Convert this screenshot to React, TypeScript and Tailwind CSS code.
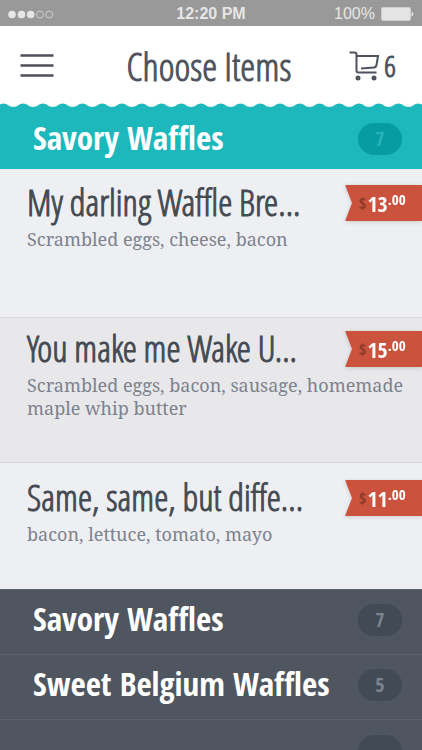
import React from "react";

const bold = "font-['Open_Sans_Condensed',sans-serif] font-bold";
const medium =
  "font-['Open_Sans_Condensed_Light','Open_Sans_Condensed',sans-serif] font-light [-webkit-text-stroke:1px]";
const slab = "font-['Noto_Serif','DejaVu_Serif',serif]";

function StatusBar() {
  return (
    <div className="grid h-[26px] grid-cols-3 items-center bg-[#999999] pt-0.5 pr-2 pl-2 font-['Liberation_Sans',sans-serif] text-base text-[#e6e6e6]">
      <svg width="46" height="9" viewBox="0 0 46 9" fill="#e6e6e6" role="img" aria-label="Signal strength">
        <circle cx="4" cy="4.5" r="3.8" />
        <circle cx="13.5" cy="4.5" r="3.8" />
        <circle cx="22.7" cy="4.5" r="3.8" />
        <g fill="none" stroke="#dcdcdc" strokeWidth="0.8">
          <circle cx="32" cy="4.5" r="3.5" />
          <circle cx="41.3" cy="4.5" r="3.5" />
        </g>
      </svg>
      <span className="text-center font-bold whitespace-nowrap">12:20 PM</span>
      <span className="flex items-center justify-end gap-1.5">
        <span>100%</span>
        <svg width="33" height="14" viewBox="0 0 33 14" role="img" aria-label="Battery full">
          <rect x="0.5" y="0.5" width="29" height="13" rx="1.5" fill="none" stroke="#cfcfcf" />
          <rect x="1" y="1" width="28" height="12" rx="1" fill="#e4e4e4" />
          <path d="M30.5 4.5q2 .5 2 2.500t-2 2.500z" fill="#e0e0e0" />
        </svg>
      </span>
    </div>
  );
}

function Header() {
  return (
    <header className="grid h-[76px] grid-cols-[1fr_auto_1fr] items-center bg-white px-5 pt-1 text-[#4e535d]">
      <button type="button" aria-label="Menu" className="justify-self-start">
        <svg width="34" height="24" viewBox="0 0 34 24" stroke="#4e505c" strokeWidth="2.500">
          <path d="M.5 1.500h33M.5 11.500h33M.5 21.500h33" />
        </svg>
      </button>
      <h1 className={"pr-1 text-[38px] leading-none whitespace-nowrap " + medium}>Choose Items</h1>
      <button type="button" aria-label="Cart, 6 items" className="flex items-center gap-1 justify-self-end pr-1.5">
        <svg width="32" height="30" viewBox="0 0 32 30" fill="none" stroke="#4e535d" strokeWidth="2">
          <path d="M1.500 1.500h5q2 0 2 2V19.500q0 2 2 2H28.500" />
          <path d="M8.500 5H30l-1.500 9q-.4 2.200-2.500 2.400L13 17.500" />
          <circle cx="10" cy="27" r="2.500" fill="#4e535d" stroke="none" />
          <circle cx="26" cy="27" r="2.500" fill="#4e535d" stroke="none" />
        </svg>
        <span className={"text-3xl " + medium}>6</span>
      </button>
    </header>
  );
}

function ScallopedEdge() {
  return (
    <svg className="block h-1.5 w-full bg-[#1db8bc]" aria-hidden="true">
      <defs>
        <pattern id="scallop" x="3.500" width="19.750" height="6" patternUnits="userSpaceOnUse">
          <path d="M0 0V1.500C4 1.500 5.500 5 9.875 5S15.750 1.500 19.750 1.500V0z" fill="#fff" />
        </pattern>
      </defs>
      <rect width="100%" height="6" fill="url(#scallop)" />
    </svg>
  );
}

function CategoryRow({ name, count, active = false }: { name: string; count: number; active?: boolean }) {
  return (
    <button
      type="button"
      className={
        "flex w-full items-center justify-between pr-5 pl-[33px] text-left text-white " +
        bold +
        (active ? " h-[61px] bg-[#1db8bc]" : " h-[65px] border-t border-[#5b626c] bg-[#4f5660] pb-1")
      }
    >
      <span className="pb-0.5 text-[33px] whitespace-nowrap">{name}</span>
      <span
        className={
          "flex h-8 w-11 items-center justify-center rounded-full text-xl " +
          (active ? "bg-[#069ca1] text-[#27b4b8]" : "bg-[#424a53] text-[#7b838d]")
        }
      >
        {count}
      </span>
    </button>
  );
}

function Price({ dollars }: { dollars: number }) {
  return (
    <div className="relative h-9 w-[77px] shrink-0 text-white drop-shadow-sm">
      <svg className="absolute inset-0" width="77" height="36" viewBox="0 0 77 36" aria-hidden="true">
        <path d="M77 0H1Q0 0 .4 1L7 18 .4 35Q0 36 1 36H77z" fill="#cb523c" />
      </svg>
      <div className={"relative flex h-9 items-center pl-3.5 " + bold}>
        <span className="pr-px text-base text-[#8c3a2b]">$</span>
        <span className="text-[22px]">{dollars}</span>
        <span className="pb-2 text-[15px]">.00</span>
      </div>
    </div>
  );
}

type Item = { name: string; detail: string; dollars: number; box: string };

const items: Item[] = [
  { name: "My darling Waffle Bre...", detail: "Scrambled eggs, cheese, bacon", dollars: 13, box: "h-[148px] bg-[#eeeff2] pt-4" },
  { name: "You make me Wake U...", detail: "Scrambled eggs, bacon, sausage, homemade maple whip butter", dollars: 15, box: "h-[146px] border-y border-[#d6d7db] bg-[#e8e8ea] pt-[13px]" },
  { name: "Same, same, but diffe...", detail: "bacon, lettuce, tomato, mayo", dollars: 11, box: "h-[126px] bg-[#eeeff2] pt-[17px]" },
];

export default function App() {
  return (
    <main className="flex h-screen flex-col overflow-hidden bg-[#4f5660] *:shrink-0">
      <StatusBar />
      <Header />
      <ScallopedEdge />
      <CategoryRow name="Savory Waffles" count={7} active />
      <ul>
        {items.map((item) => (
          <li key={item.name} className={item.box}>
            <div className="flex items-center justify-between pl-[27px]">
              <h2 className={"text-[36px] leading-9 whitespace-nowrap text-[#444a52] " + medium}>{item.name}</h2>
              <Price dollars={item.dollars} />
            </div>
            <p className={"mt-[7px] pr-3 pl-[27px] text-lg leading-[23px] text-[#7c828e] " + slab}>{item.detail}</p>
          </li>
        ))}
      </ul>
      <CategoryRow name="Savory Waffles" count={7} />
      <CategoryRow name="Sweet Belgium Waffles" count={5} />
      <div className="h-[65px] border-t border-[#5b626c] pt-[15px] pr-5">
        <div className="ml-auto h-8 w-11 rounded-full bg-[#424a53]" />
      </div>
    </main>
  );
}
